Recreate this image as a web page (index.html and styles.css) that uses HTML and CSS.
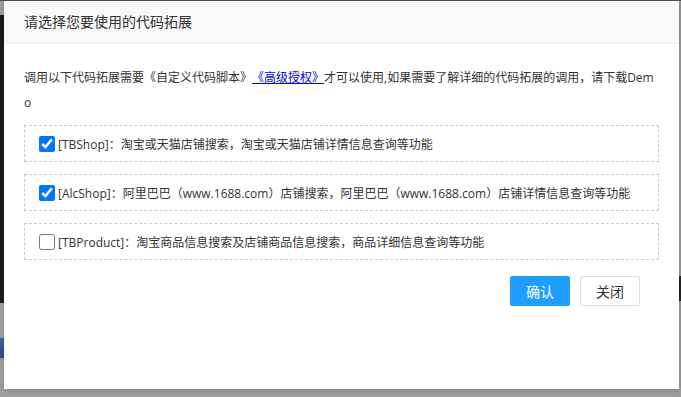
FILE: index.html
```html
<!DOCTYPE html>
<html lang="zh-CN">
<head>
    <meta charset="UTF-8">
    <meta name="viewport" content="width=device-width, initial-scale=1.0">
    <title>代码拓展</title>
    <link rel="stylesheet" href="styles.css">
</head>
<body>
    <div class="backdrop">
        <div class="side-dark"></div>
        <div class="side-blue"></div>
        <div class="side-right"></div>
    </div>

    <div class="dialog">
        <div class="dialog-title">请选择您要使用的代码拓展</div>
        <div class="dialog-content">
            <p class="intro">调用以下代码拓展需要《自定义代码脚本》<a href="#">《高级授权》</a>才可以使用,如果需要了解详细的代码拓展的调用，请下载Demo</p>

            <div class="ext-list">
                <label class="ext-item">
                    <input type="checkbox" checked>
                    <span>[TBShop]：淘宝或天猫店铺搜索，淘宝或天猫店铺详情信息查询等功能</span>
                </label>
                <label class="ext-item">
                    <input type="checkbox" checked>
                    <span>[AlcShop]：阿里巴巴（www.1688.com）店铺搜索，阿里巴巴（www.1688.com）店铺详情信息查询等功能</span>
                </label>
                <label class="ext-item">
                    <input type="checkbox">
                    <span>[TBProduct]：淘宝商品信息搜索及店铺商品信息搜索，商品详细信息查询等功能</span>
                </label>
            </div>

            <div class="actions">
                <button class="btn btn-primary">确认</button>
                <button class="btn">关闭</button>
            </div>
        </div>
    </div>
</body>
</html>
```

FILE: styles.css
```css
body {
    margin: 0;
    width: 681px;
    height: 397px;
    overflow: hidden;
    background-color: #9e9e9e;
    font-family: "Open Sans", "Noto Sans CJK SC", sans-serif;
    color: #333333;
    position: relative;
    text-spacing-trim: space-all;
}

/* page behind the shade */
.backdrop {
    position: absolute;
    inset: 0;
    border-top: 1px solid #4e4e4e;
}
.side-dark {
    position: absolute;
    left: 0;
    top: 14px;
    width: 4px;
    height: 288px;
    background-color: #1c1c1c;
}
.side-blue {
    position: absolute;
    left: 0;
    top: 337px;
    width: 4px;
    height: 20px;
    background: linear-gradient(#40609c, #2e4c88);
}
.side-right {
    position: absolute;
    right: 0;
    top: 275px;
    width: 2px;
    height: 25px;
    background-color: #262626;
}

/* dialog */
.dialog {
    position: absolute;
    left: 4px;
    top: 1px;
    width: 675px;
    height: 388px;
    background: #FFFFFF;
    box-shadow: 1px 1px 6px rgba(0, 0, 0, 0.2);
}
.dialog-title {
    height: 42px;
    line-height: 42px;
    padding: 0 20px;
    background-color: #F8F8F8;
    border-bottom: 1px solid #eeeeee;
    font-size: 14px;
    color: #333333;
}
.dialog-content {
    padding: 21px 20px 0;
}
.intro {
    margin: 0;
    padding-right: 4px;
    font-size: 12px;
    line-height: 25px;
    word-break: break-all;
}
.intro a {
    color: #0000ee;
    text-decoration: underline;
}
.ext-list {
    display: flex;
    flex-direction: column;
    gap: 12px;
    margin-top: 10px;
}
.ext-item {
    display: flex;
    align-items: center;
    height: 37px;
    box-sizing: border-box;
    padding: 0 10px;
    border: 1px dashed #cccccc;
    font-size: 12px;
    cursor: pointer;
}
.ext-item input {
    width: 16px;
    height: 16px;
    margin: 3px 3px 3px 4px;
    accent-color: #0075ff;
}
.actions {
    display: flex;
    justify-content: flex-end;
    gap: 10px;
    margin-top: 16px;
    padding-right: 19px;
}
.btn {
    width: 60px;
    height: 30px;
    border: 1px solid #dedede;
    border-radius: 2px;
    background-color: #FFFFFF;
    color: #333333;
    font-family: inherit;
    font-size: 14px;
    cursor: pointer;
}
.btn-primary {
    background-color: #1E9FFF;
    border-color: #1E9FFF;
    color: #FFFFFF;
}
```
